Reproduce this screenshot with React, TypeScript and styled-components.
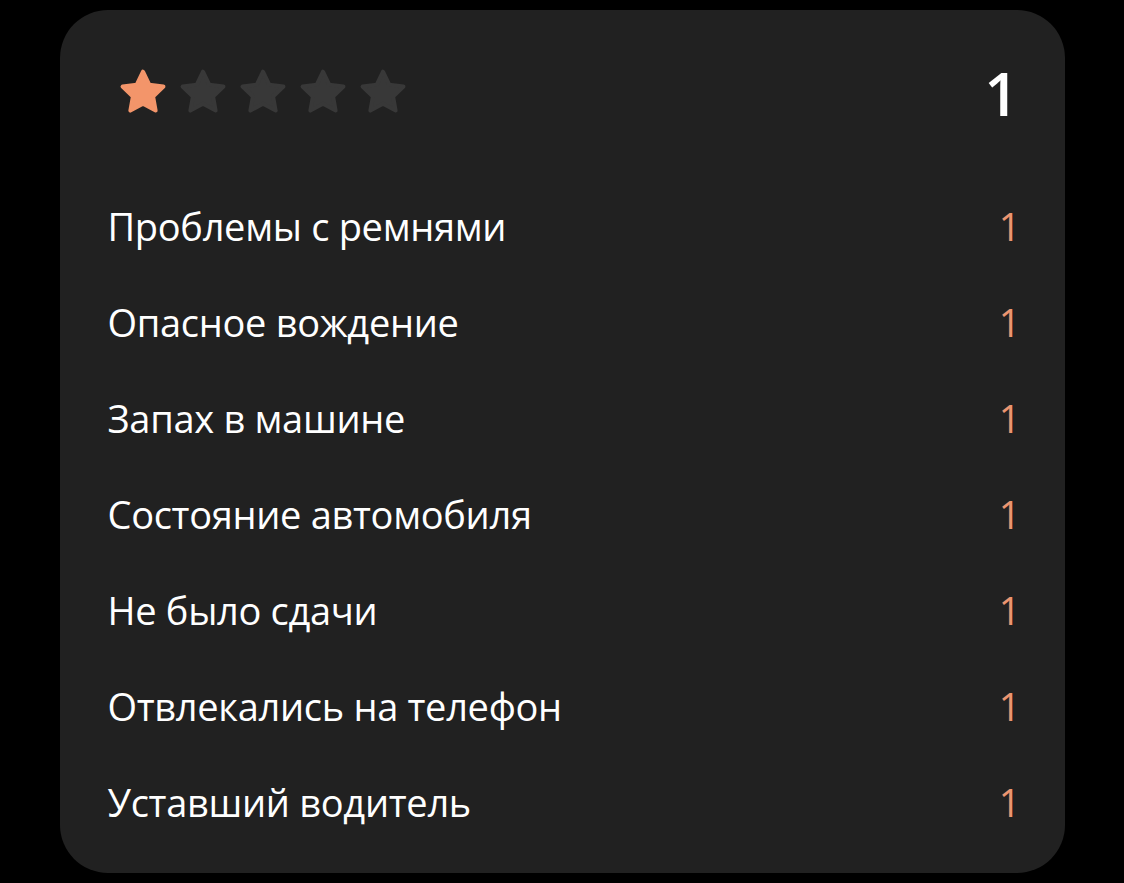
import React from "react";
import styled, { createGlobalStyle } from "styled-components";

const colours = {
  page: "#000000",
  card: "#212121",
  text: "#ffffff",
  accent: "#f3956a",
  count: "#eb9570",
  starOff: "#383838",
};

const GlobalStyle = createGlobalStyle`
  html, body {
    margin: 0;
    padding: 0;
    background: ${colours.page};
  }
  body {
    font-family: "Open Sans", "Noto Sans", sans-serif;
    -webkit-font-smoothing: antialiased;
  }
`;

const Page = styled("div")`
  display: flex;
  justify-content: center;
  padding: 10px 0;
  min-height: 883px;
  box-sizing: border-box;
`;

const Card = styled("section")`
  width: 1005px;
  height: 863px;
  box-sizing: border-box;
  background-color: ${colours.card};
  border-radius: 48px;
  padding: 50px 44px 21px 48px;
  display: flex;
  flex-direction: column;
`;

const Header = styled("div")`
  display: flex;
  align-items: center;
  justify-content: space-between;
  height: 64px;
  margin-bottom: 54px;
`;

const Stars = styled("div")`
  display: flex;
  gap: 12px;
  padding-left: 11px;
`;

const Total = styled("span")`
  color: ${colours.text};
  font-size: 60px;
  font-weight: 600;
  line-height: 1;
  margin-top: 2px;
  margin-right: 2px;
`;

const List = styled("ul")`
  list-style: none;
  margin: 0;
  padding: 0;
`;

const Row = styled("li")`
  display: flex;
  align-items: center;
  justify-content: space-between;
  height: 96px;
`;

const Label = styled("span")`
  color: ${colours.text};
  font-size: 38px;
  letter-spacing: -0.3px;
`;

const Count = styled("span")<{ $accent?: boolean }>`
  color: ${(p) => (p.$accent ? colours.count : colours.text)};
  font-size: 38px;
`;

// five-point star with softened corners
const starPoints = (() => {
  const cx = 24;
  const cy = 25.2;
  const outer = 21.5;
  const inner = 10.6;
  const pts: string[] = [];
  for (let i = 0; i < 10; i++) {
    const r = i % 2 === 0 ? outer : inner;
    const a = -Math.PI / 2 + (i * Math.PI) / 5;
    pts.push(`${(cx + r * Math.cos(a)).toFixed(2)},${(cy + r * Math.sin(a)).toFixed(2)}`);
  }
  return pts.join(" ");
})();

const Star = ({ on }: { on: boolean }) => {
  const fill = on ? colours.accent : colours.starOff;
  return (
    <svg width="48" height="48" viewBox="0 0 48 48">
      <polygon
        points={starPoints}
        fill={fill}
        stroke={fill}
        strokeWidth="4"
        strokeLinejoin="round"
      />
    </svg>
  );
};

const reasons = [
  "Проблемы с ремнями",
  "Опасное вождение",
  "Запах в машине",
  "Состояние автомобиля",
  "Не было сдачи",
  "Отвлекались на телефон",
  "Уставший водитель",
];

const rating = 1;

export default function App() {
  return (
    <>
      <GlobalStyle />
      <Page>
        <Card>
          <Header>
            <Stars>
              {[1, 2, 3, 4, 5].map((n) => (
                <Star key={n} on={n <= rating} />
              ))}
            </Stars>
            <Total>1</Total>
          </Header>
          <List>
            {reasons.map((reason) => (
              <Row key={reason}>
                <Label>{reason}</Label>
                <Count $accent>1</Count>
              </Row>
            ))}
          </List>
        </Card>
      </Page>
    </>
  );
}
